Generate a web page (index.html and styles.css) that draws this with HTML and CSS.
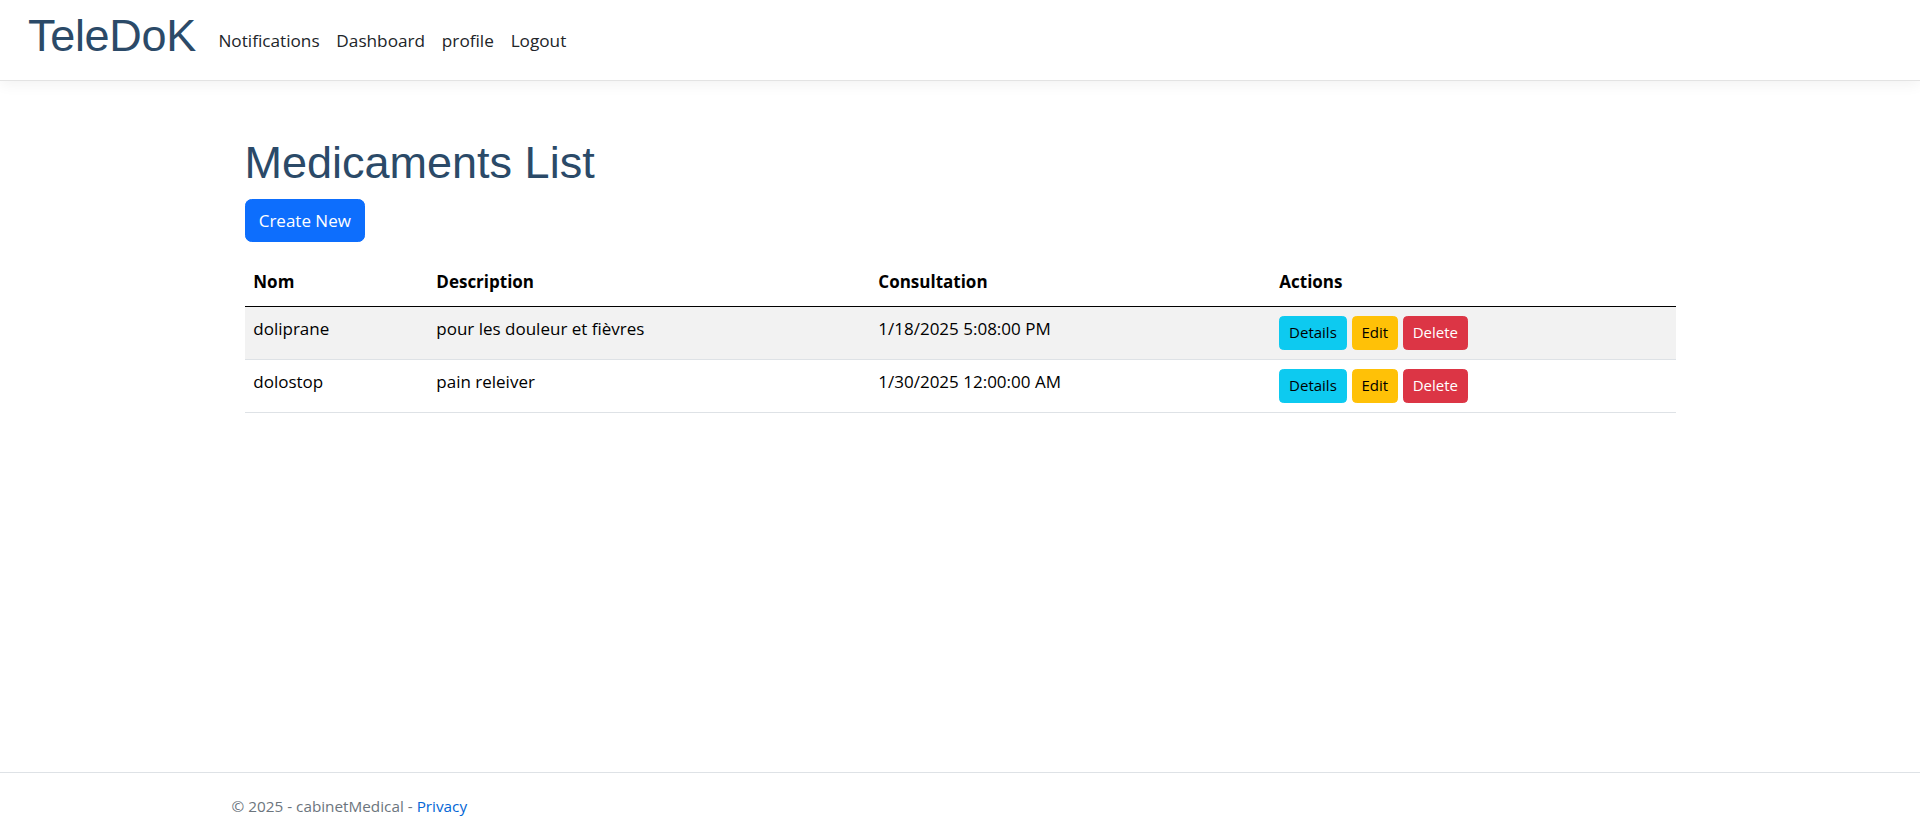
FILE: index.html
```html
<!DOCTYPE html>
<html lang="fr">
<head>
<meta charset="utf-8">
<title>Medicaments List - TeleDoK</title>
<link rel="stylesheet" href="styles.css">
</head>
<body>
<header class="navbar">
  <a class="brand" href="#">TeleDoK</a>
  <ul class="nav">
    <li><a class="nav-link" href="#">Notifications</a></li>
    <li><a class="nav-link" href="#">Dashboard</a></li>
    <li><a class="nav-link" href="#">profile</a></li>
    <li><a class="nav-link" href="#">Logout</a></li>
  </ul>
</header>
<main class="main">
  <div class="container">
    <h1 class="title">Medicaments List</h1>
    <p class="actions-top"><a class="btn btn-primary" href="#">Create New</a></p>
    <table class="table">
      <colgroup>
        <col class="c-nom"><col class="c-desc"><col class="c-cons"><col class="c-act">
      </colgroup>
      <thead>
        <tr><th>Nom</th><th>Description</th><th>Consultation</th><th>Actions</th></tr>
      </thead>
      <tbody>
        <tr class="striped">
          <td>doliprane</td>
          <td>pour les douleur et fièvres</td>
          <td>1/18/2025 5:08:00 PM</td>
          <td><div class="btn-group"><a class="btn btn-sm btn-info" href="#">Details</a><a class="btn btn-sm btn-warning" href="#">Edit</a><a class="btn btn-sm btn-danger" href="#">Delete</a></div></td>
        </tr>
        <tr>
          <td>dolostop</td>
          <td>pain releiver</td>
          <td>1/30/2025 12:00:00 AM</td>
          <td><div class="btn-group"><a class="btn btn-sm btn-info" href="#">Details</a><a class="btn btn-sm btn-warning" href="#">Edit</a><a class="btn btn-sm btn-danger" href="#">Delete</a></div></td>
        </tr>
      </tbody>
    </table>
  </div>
</main>
<footer class="footer">
  <div class="footer-inner">&copy; 2025 - cabinetMedical - <a class="footer-link" href="#">Privacy</a></div>
</footer>
</body>
</html>
```

FILE: styles.css
```css
* { box-sizing: border-box; }

html, body { height: 100%; }

body {
  margin: 0;
  font-family: "Open Sans", "Noto Sans", sans-serif;
  font-size: 17px;
  color: #212529;
  background: #fff;
  display: flex;
  flex-direction: column;
  min-height: 100vh;
}

a { text-decoration: none; }

.navbar {
  display: flex;
  align-items: flex-start;
  height: 81px;
  padding: 0 13px 0 28px;
  background: #fff;
  border-bottom: 1px solid #e3e3e3;
  box-shadow: 0 4px 13px rgba(0, 0, 0, 0.05);
  flex-shrink: 0;
}

.brand {
  font-family: "Liberation Sans", Arial, sans-serif;
  font-size: 45px;
  line-height: 45px;
  margin-top: 13px;
  margin-right: 14px;
  color: #2b4a68;
  letter-spacing: -0.3px;
}

.nav {
  display: flex;
  list-style: none;
  margin: 19px 0 0;
  padding: 0;
}

.nav-link {
  display: block;
  padding: 8.8px 8.4px;
  font-size: 17.2px;
  line-height: 26.4px;
  color: #212529;
}

.main { flex: 1; }

.container {
  width: 1431px;
  margin: 0 auto;
}

.title {
  font-family: "Liberation Sans", Arial, sans-serif;
  font-weight: 400;
  font-size: 45px;
  line-height: 54px;
  color: #2b4a68;
  margin: 55px 0 9px;
}

.actions-top { margin: 0 0 17.6px; }

.btn {
  display: inline-block;
  border: 1px solid transparent;
  border-radius: 6.6px;
  font-size: 17px;
  line-height: 27px;
  padding: 6.8px 13.2px;
  color: #fff;
}

.btn-primary { background: #0d6efd; border-color: #0d6efd; }

.table {
  width: 100%;
  border-collapse: collapse;
  table-layout: fixed;
}

.c-nom { width: 183px; }
.c-desc { width: 442px; }
.c-cons { width: 401px; }
.c-act { width: 405px; }

.table th {
  text-align: left;
  font-weight: 700;
  color: #000;
  padding: 10px 8.8px;
  line-height: 26.4px;
  border-bottom: 1px solid #000;
}

.table td {
  padding: 9px 8.8px;
  line-height: 26.4px;
  vertical-align: top;
  border-bottom: 1px solid #dee2e6;
  color: #000;
}

.table tr.striped td { background: #f2f2f2; }

.btn-group {
  display: flex;
  gap: 5px;
}

.btn-sm {
  font-size: 15px;
  line-height: 23.6px;
  padding: 4.4px 8.8px;
  border-radius: 4.4px;
}

.btn-info { background: #0dcaf0; border-color: #0dcaf0; color: #000; }
.btn-warning { background: #ffc107; border-color: #ffc107; color: #000; }
.btn-danger { background: #dc3545; border-color: #dc3545; color: #fff; }

.footer {
  border-top: 1px solid #dee2e6;
  line-height: 66px;
  font-size: 15.3px;
  color: #6c757d;
  white-space: nowrap;
  flex-shrink: 0;
}

.footer-inner {
  width: 1457px;
  margin: 0 auto;
}

.footer-link { color: #0366d6; }
```
